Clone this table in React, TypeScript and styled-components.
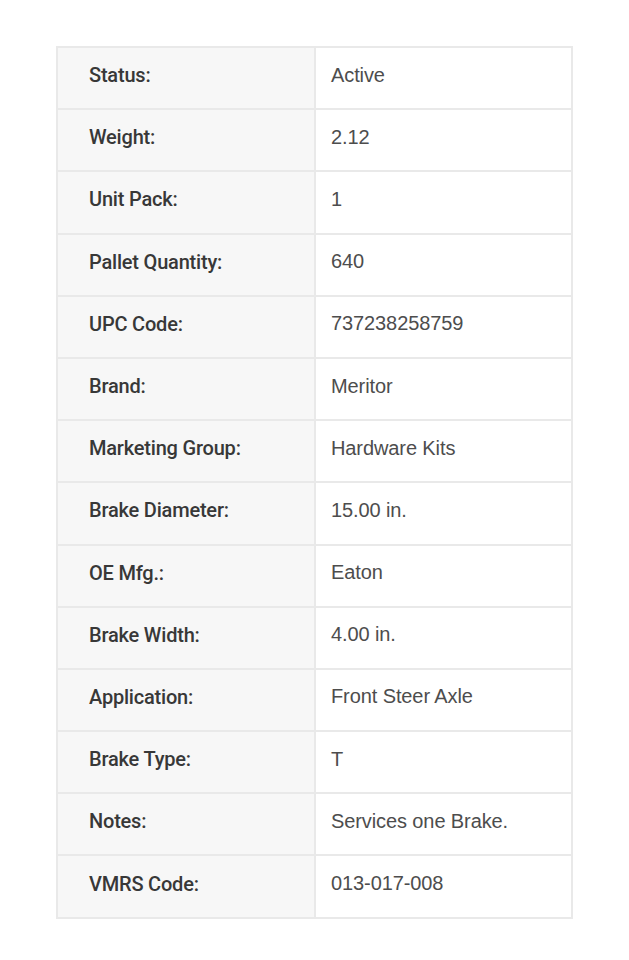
import React from "react";
import styled, { createGlobalStyle } from "styled-components";

const specs = [
  ["Status:", "Active"],
  ["Weight:", "2.12"],
  ["Unit Pack:", "1"],
  ["Pallet Quantity:", "640"],
  ["UPC Code:", "737238258759"],
  ["Brand:", "Meritor"],
  ["Marketing Group:", "Hardware Kits"],
  ["Brake Diameter:", "15.00 in."],
  ["OE Mfg.:", "Eaton"],
  ["Brake Width:", "4.00 in."],
  ["Application:", "Front Steer Axle"],
  ["Brake Type:", "T"],
  ["Notes:", "Services one Brake."],
  ["VMRS Code:", "013-017-008"],
];

const App = () => {
  return (
    <>
      <GlobalStyle />
      <Page>
        <SpecTable>
          <tbody>
            {specs.map(([label, value]) => (
              <Row key={label}>
                <Label>{label}</Label>
                <Value>{value}</Value>
              </Row>
            ))}
          </tbody>
        </SpecTable>
      </Page>
    </>
  );
};

export default App;

const GlobalStyle = createGlobalStyle`
  body {
    margin: 0;
    background: #ffffff;
    font-family: "Liberation Sans", Arial, sans-serif;
  }
`;

const Page = styled.div`
  width: 629px;
  padding: 46px 0 42px 56px;
  box-sizing: border-box;
`;

const SpecTable = styled.table`
  width: 517px;
  border-collapse: collapse;
  border: 2px solid #ececec;
  table-layout: fixed;
`;

const Row = styled.tr`
  height: 62.2px;
`;

const Label = styled.td`
  width: 258px;
  padding: 0 0 6px 31px;
  background: #f7f7f7;
  border: 2px solid #e9e9e9;
  color: #383838;
  font-family: Roboto, "Liberation Sans", sans-serif;
  font-size: 20px;
  font-weight: 500;
  letter-spacing: -0.2px;
  box-sizing: border-box;
`;

const Value = styled.td`
  padding: 0 0 6px 15px;
  background: #ffffff;
  border: 2px solid #e9e9e9;
  color: #4d4d4d;
  font-size: 20px;
  letter-spacing: -0.1px;
`;
